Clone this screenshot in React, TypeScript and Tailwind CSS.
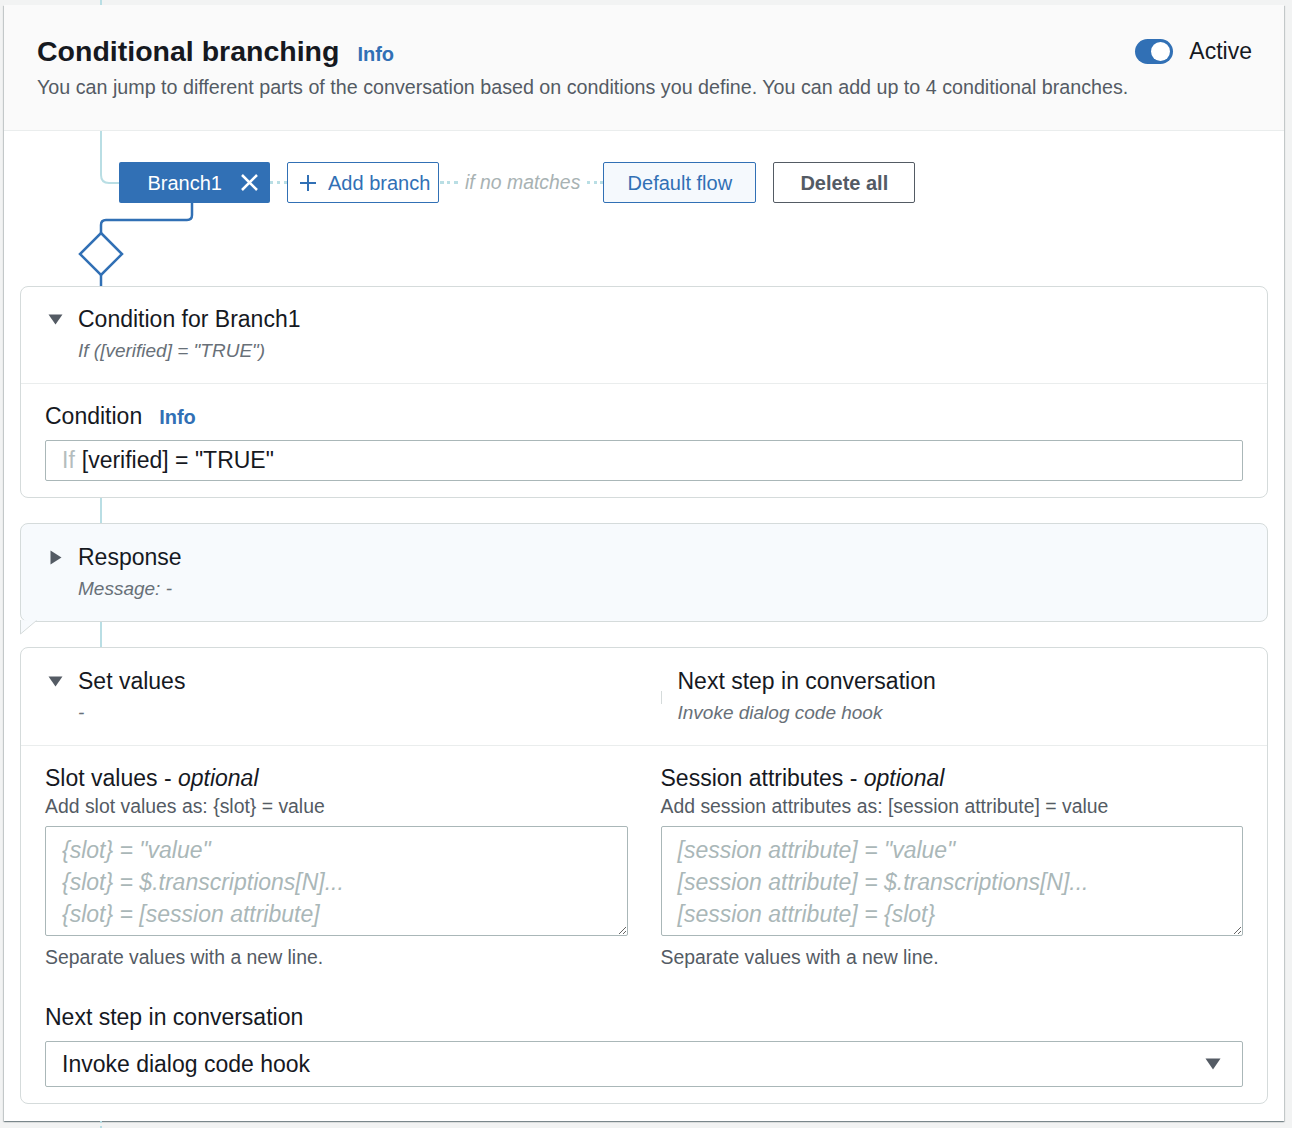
import React from 'react';

const BLUE = '#3170b5';

function CaretDown() {
  return (
    <svg width="15" height="11" viewBox="0 0 15 11" className="shrink-0">
      <path d="M0.5 0.5 H14.5 L7.5 10.5 Z" fill="#545b64" />
    </svg>
  );
}

function CaretRight() {
  return (
    <svg width="12" height="15" viewBox="0 0 12 15" className="shrink-0">
      <path d="M0.5 0.5 L11.5 7.5 L0.5 14.5 Z" fill="#545b64" />
    </svg>
  );
}

function Connector() {
  return (
    <div className="h-[25px]">
      <div className="ml-[80px] h-full w-[2px] bg-[#b9dee4]" />
    </div>
  );
}

function CardHeader({ title, sub, open = true, top = 'pt-[18px]', left = 'pl-[27px]' }: { title: string; sub: string; open?: boolean; top?: string; left?: string }) {
  return (
    <div className={`${top} ${left} pb-[19px]`}>
      <div className="flex h-[30px] items-center gap-[15px]">
        {open ? <CaretDown /> : <span className="ml-[2px] mr-[1px] flex"><CaretRight /></span>}
        <span className="text-[23px] leading-[30px] text-[#16191f]">{title}</span>
      </div>
      <div className="mt-[4px] pl-[30px] text-[19px] italic leading-[26px] text-[#687078]">{sub}</div>
    </div>
  );
}

function FieldLabel({ children }: { children: React.ReactNode }) {
  return <div className="text-[23px] leading-[30px] text-[#16191f]">{children}</div>;
}

export default function App() {
  return (
    <div className="min-h-screen bg-[#f2f3f3] pl-[4px] pr-[8px] font-['Liberation_Sans',Arial,sans-serif]">
      <div className="h-[5px]">
        <div className="ml-[96px] h-full w-[2px] bg-[#b9dee4]" />
      </div>

      <div className="bg-white shadow-[0_1px_1px_0_rgba(0,28,36,0.3),1px_1px_1px_0_rgba(0,28,36,0.15),-1px_1px_1px_0_rgba(0,28,36,0.15)]">
        {/* Header */}
        <div className="border-b border-[#eaeded] bg-[#fafafa] pb-[30px] pl-[33px] pr-[32px] pt-[28px]">
          <div className="flex h-[36px] items-center justify-between">
            <div className="flex h-[36px] items-baseline gap-[18px]">
              <h1 className="text-[28.5px] font-bold leading-[36px] text-[#16191f]">Conditional branching</h1>
              <span className="text-[20px] font-bold leading-[36px] text-[#3170b5]">Info</span>
            </div>
            <div className="flex items-center gap-[16px]">
              <div className="flex h-[25px] w-[38px] items-center justify-end rounded-full bg-[#3170b5] pr-[3px]">
                <div className="h-[19px] w-[19px] rounded-full bg-white" />
              </div>
              <span className="text-[23px] leading-[30px] text-[#16191f]">Active</span>
            </div>
          </div>
          <p className="mt-[5px] text-[19.7px] leading-[26px] text-[#545b64]">
            You can jump to different parts of the conversation based on conditions you define. You can add up to 4 conditional branches.
          </p>
        </div>

        {/* Branch flow */}
        <div className="relative h-[155px]">
          <svg className="absolute left-0 top-0" width="300" height="155" viewBox="0 0 300 155" fill="none">
            <path d="M97 0 V44 Q97 52 105 52 H115" stroke="#b9dee4" strokeWidth="2" />
            <path d="M188 72 V84 Q188 89 183 89 H102 Q97 89 97 94 V102" stroke={BLUE} strokeWidth="2.5" />
            <path d="M97 102 L118 123 L97 144 L76 123 Z" stroke={BLUE} strokeWidth="2.5" fill="white" />
            <path d="M97 144 V155" stroke={BLUE} strokeWidth="2.5" />
          </svg>
          <div className="relative flex items-center pl-[115px] pt-[31px]">
            <button className="flex h-[41px] w-[151px] items-center justify-end gap-[18px] rounded-[2px] bg-[#3170b5] pr-[11px] text-[20px] text-white">
              <span>Branch1</span>
              <svg width="19" height="19" viewBox="0 0 19 19">
                <path d="M2 2 L17 17 M17 2 L2 17" stroke="white" strokeWidth="2.5" />
              </svg>
            </button>
            <div className="w-[17px] border-t-[3px] border-dotted border-[#b9dee4]" />
            <button className="flex h-[41px] w-[152px] items-center gap-[11px] rounded-[2px] border border-[#3170b5] bg-white pl-[11px] text-[20px] text-[#3170b5]">
              <svg width="18" height="18" viewBox="0 0 18 18">
                <path d="M9 1 V17 M1 9 H17" stroke={BLUE} strokeWidth="2" />
              </svg>
              <span>Add branch</span>
            </button>
            <div className="ml-[1px] w-[18px] border-t-[3px] border-dotted border-[#b9dee4]" />
            <span className="ml-[7px] mr-[7px] text-[19.4px] italic text-[#a8b2b3]">if no matches</span>
            <div className="w-[16px] border-t-[3px] border-dotted border-[#b9dee4]" />
            <button className="flex h-[41px] w-[153px] items-center justify-center rounded-[2px] border border-[#3170b5] bg-[#f5f9fd] text-[20px] text-[#3170b5]">
              Default flow
            </button>
            <button className="ml-[17px] flex h-[41px] w-[142px] items-center justify-center rounded-[2px] border border-[#545b64] bg-white text-[20px] font-bold text-[#545b64]">
              Delete all
            </button>
          </div>
        </div>

        <div className="px-4 pb-[17px]">
          {/* Condition */}
          <div className="rounded-[8px] border border-[#d5dbdb] bg-white">
            <div className="border-b border-[#eaeded]">
              <CardHeader title="Condition for Branch1" sub={'If ([verified] = "TRUE")'} top="pt-[17px]" />
            </div>
            <div className="px-[24px] pb-[16px] pt-[17px]">
              <div className="flex h-[30px] items-baseline gap-[17px]">
                <FieldLabel>Condition</FieldLabel>
                <span className="text-[20px] font-bold leading-[30px] text-[#3170b5]">Info</span>
              </div>
              <div className="mt-[9px] flex h-[41px] items-center gap-[7px] rounded-[2px] border border-[#aab7b8] px-[16px] text-[23px] text-[#16191f]">
                <span className="text-[#b4bdbe]">If</span>
                <span>[verified] = "TRUE"</span>
              </div>
            </div>
          </div>

          <Connector />

          {/* Response */}
          <div className="relative rounded-[8px] border border-[#d5dbdb] bg-[#f7fafd]">
            <CardHeader title="Response" sub="Message: -" open={false} />
            <svg className="absolute left-[-1px] top-[calc(100%-1px)]" width="18" height="15" viewBox="0 0 18 15">
              <path d="M0.5 0 V14 L16.5 0.5" fill="#f7fafd" stroke="#d5dbdb" strokeWidth="1" />
            </svg>
          </div>

          <Connector />

          {/* Set values */}
          <div className="rounded-[8px] border border-[#d5dbdb] bg-white">
            <div className="grid grid-cols-2 gap-[33px] border-b border-[#eaeded] px-[24px]">
              <CardHeader title="Set values" sub="-" left="pl-[3px]" />
              <div className="flex pt-[18px]">
                <div className="mt-[25px] h-[13px] w-px bg-[#d5dbdb]" />
                <div className="pl-[16px]">
                  <div className="text-[23px] leading-[30px] text-[#16191f]">Next step in conversation</div>
                  <div className="mt-[4px] text-[19px] italic leading-[26px] text-[#687078]">Invoke dialog code hook</div>
                </div>
              </div>
            </div>

            <div className="px-[24px] pb-[16px] pt-[17px]">
              <div className="grid grid-cols-2 gap-[33px]">
                <div>
                  <FieldLabel>
                    Slot values - <span className="italic">optional</span>
                  </FieldLabel>
                  <div className="text-[19.4px] leading-[26px] text-[#545b64]">Add slot values as: {'{slot}'} = value</div>
                  <textarea
                    className="mt-[7px] block h-[110px] w-full rounded-[2px] border border-[#aab7b8] px-[16px] pt-[7px] text-[23px] leading-[32px] outline-none placeholder:italic placeholder:text-[#aab7b8]"
                    placeholder={'{slot} = "value"\n{slot} = $.transcriptions[N]...\n{slot} = [session attribute]'}
                  />
                  <div className="mt-[8px] text-[19.4px] leading-[26px] text-[#545b64]">Separate values with a new line.</div>
                </div>
                <div>
                  <FieldLabel>
                    Session attributes - <span className="italic">optional</span>
                  </FieldLabel>
                  <div className="text-[19.4px] leading-[26px] text-[#545b64]">Add session attributes as: [session attribute] = value</div>
                  <textarea
                    className="mt-[7px] block h-[110px] w-full rounded-[2px] border border-[#aab7b8] px-[16px] pt-[7px] text-[23px] leading-[32px] outline-none placeholder:italic placeholder:text-[#aab7b8]"
                    placeholder={'[session attribute] = "value"\n[session attribute] = $.transcriptions[N]...\n[session attribute] = {slot}'}
                  />
                  <div className="mt-[8px] text-[19.4px] leading-[26px] text-[#545b64]">Separate values with a new line.</div>
                </div>
              </div>

              <div className="mt-[32px]">
                <FieldLabel>Next step in conversation</FieldLabel>
              </div>
              <div className="mt-[9px] flex h-[46px] items-center justify-between rounded-[2px] border border-[#aab7b8] pl-[16px] pr-[21px] text-[23px] text-[#16191f]">
                <span>Invoke dialog code hook</span>
                <svg width="16" height="12" viewBox="0 0 16 12">
                  <path d="M0.5 0.5 H15.5 L8 11.5 Z" fill="#545b64" />
                </svg>
              </div>
            </div>
          </div>
        </div>
      </div>

      <div className="h-[7px]">
        <div className="ml-[96px] h-full border-l-2 border-dotted border-[#b9dee4]" />
      </div>
    </div>
  );
}
